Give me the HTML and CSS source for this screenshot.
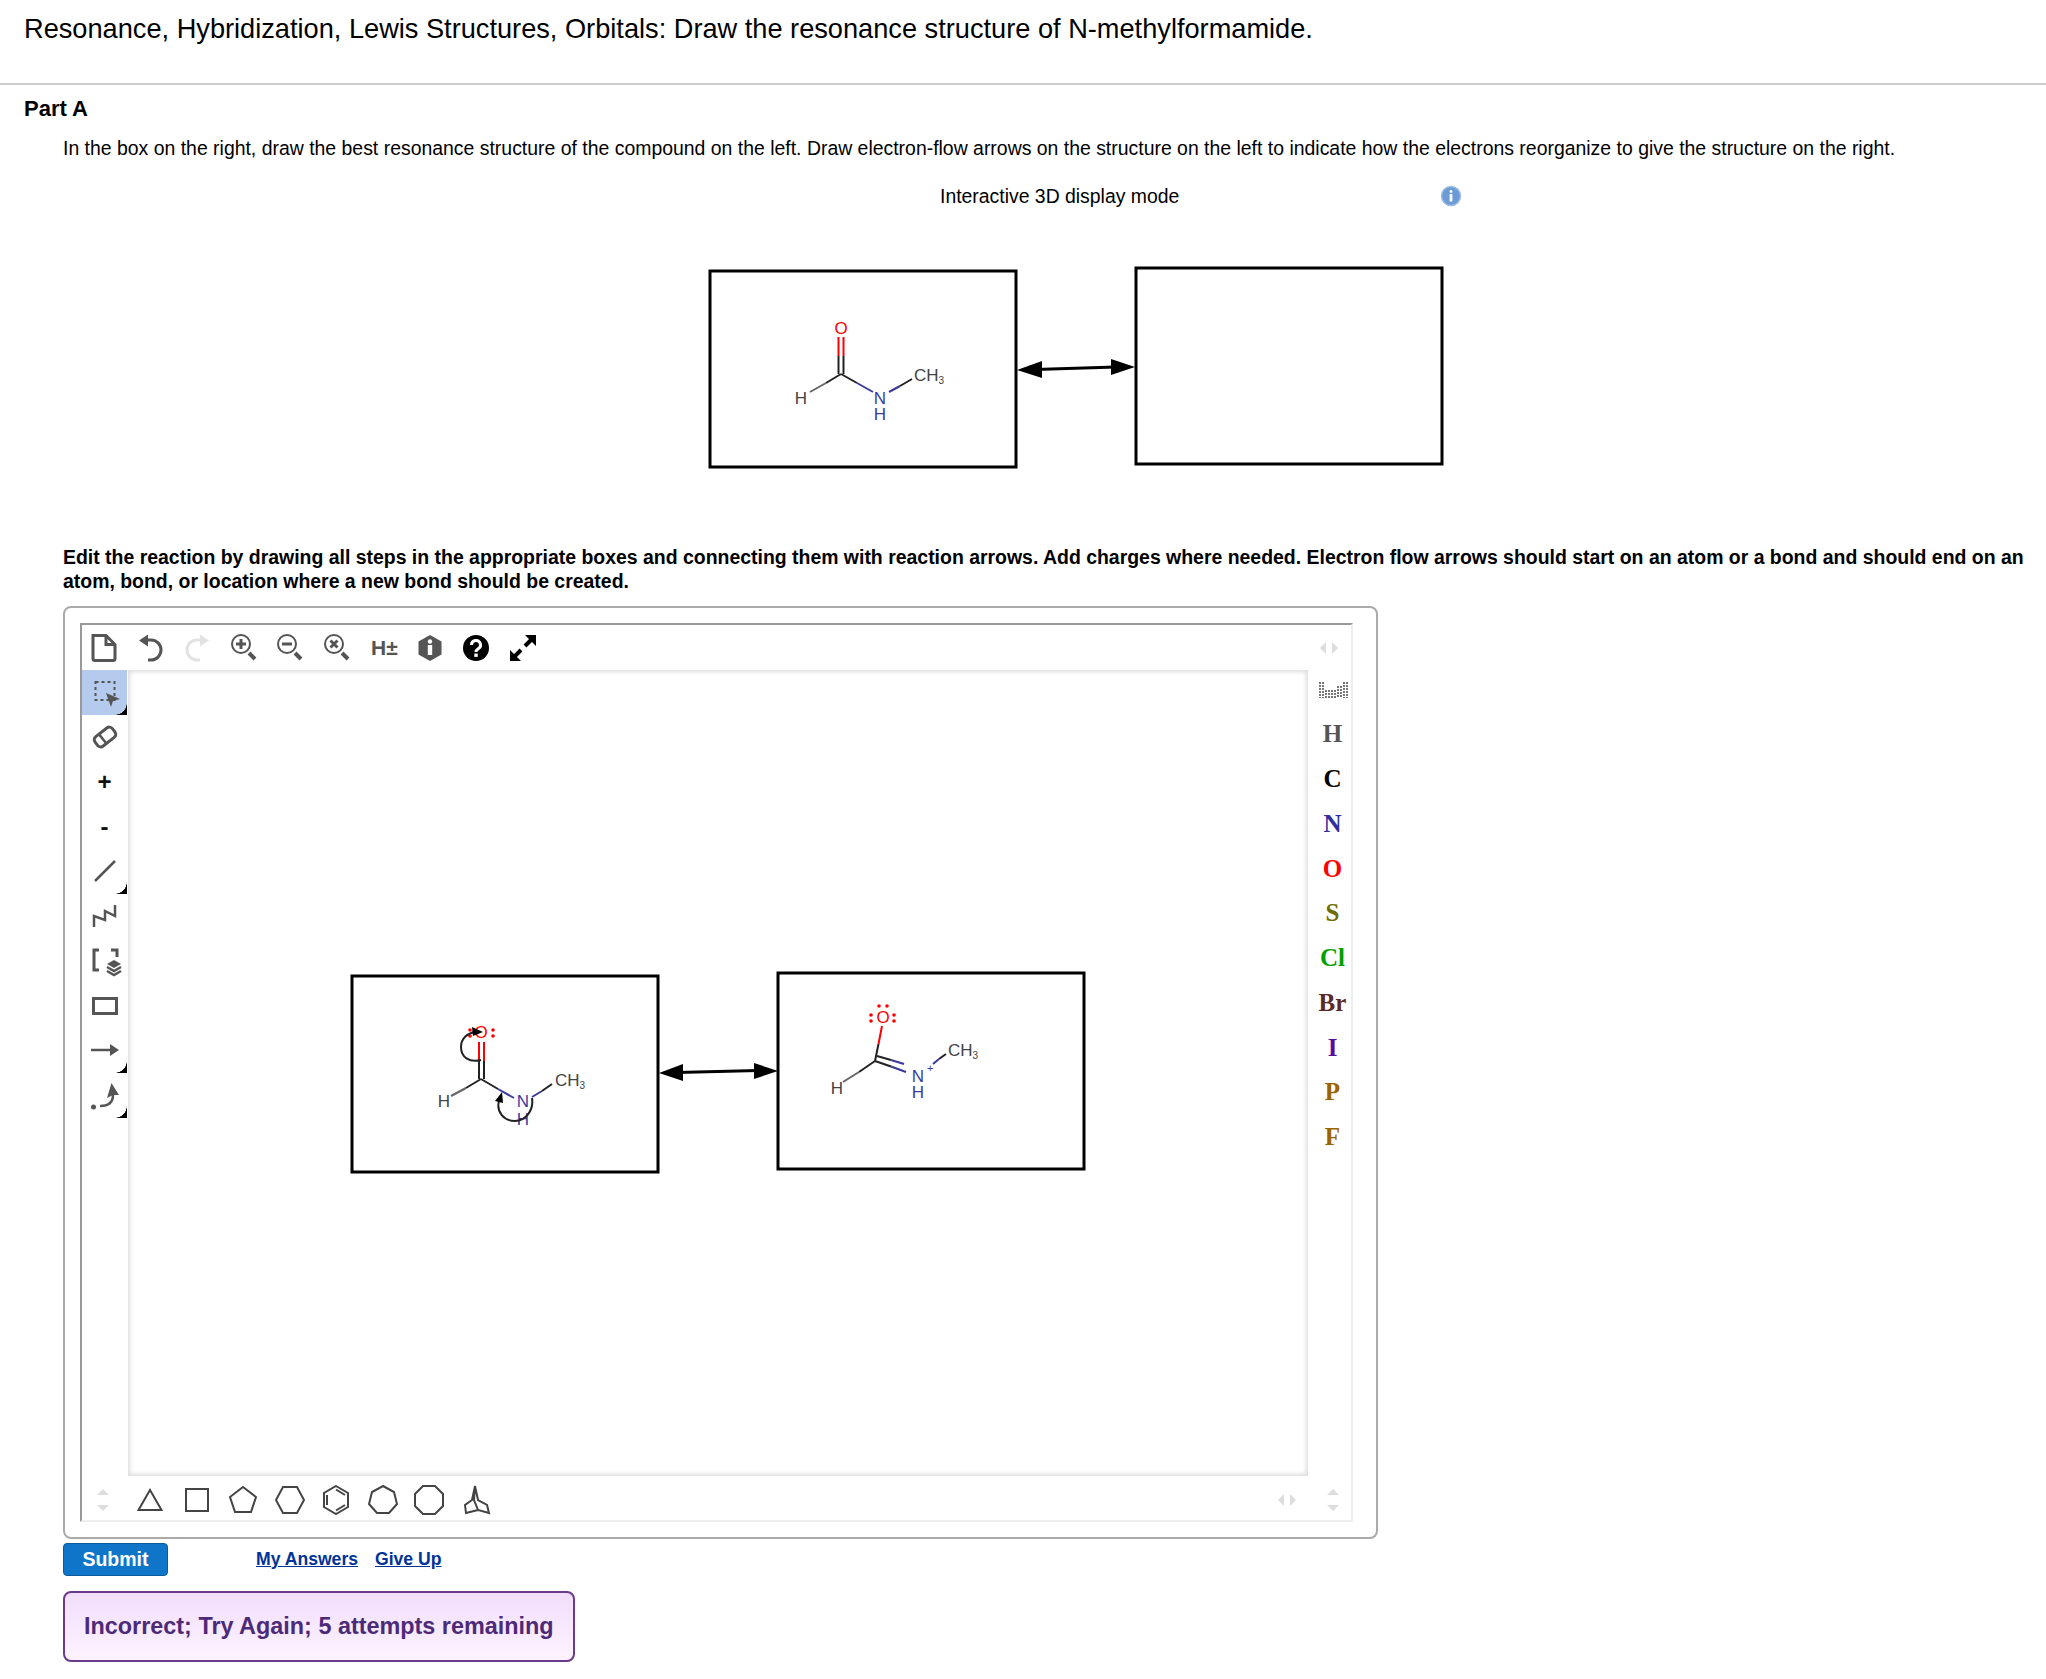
FILE: index.html
```html
<!DOCTYPE html>
<html lang="en">
<head>
    <meta charset="UTF-8">
    <title>Resonance, Hybridization, Lewis Structures, Orbitals</title>
    <link rel="stylesheet" href="styles.css">
</head>
<body>
    <h1 class="title">Resonance, Hybridization, Lewis Structures, Orbitals: Draw the resonance structure of N-methylformamide.</h1>
    <h2 class="part">Part A</h2>
    <p class="intro">In the box on the right, draw the best resonance structure of the compound on the left. Draw electron-flow arrows on the structure on the left to indicate how the electrons reorganize to give the structure on the right.</p>

    <div class="display-mode">
        <span class="display-label">Interactive 3D display mode</span>
        <svg class="info-dot" width="22" height="22" viewBox="0 0 22 22">
            <circle cx="11" cy="11" r="9.5" fill="#6b9bd6" stroke="#9dbbdd" stroke-width="1.5"/>
            <circle cx="11" cy="6.5" r="1.4" fill="#fff"/>
            <rect x="9.6" y="9" width="2.8" height="7.5" fill="#fff"/>
        </svg>
    </div>

    <!-- question scheme, coordinates are page pixels -->
    <svg class="scene" width="750" height="215" viewBox="700 260 750 215">
        <rect class="box" x="710" y="270" width="306" height="196"/>
        <rect class="box" x="1136" y="267" width="306" height="196"/>
        <line class="link" x1="1035" y1="368.5" x2="1116" y2="366"/>
        <polygon points="1017,369 1042,360 1042,377"/>
        <polygon points="1135,366 1111,358 1111,374"/>
        <g class="bond">
            <line class="red" x1="838.5" y1="336" x2="838.5" y2="355"/>
            <line class="red" x1="843.5" y1="336" x2="843.5" y2="355"/>
            <line x1="838.5" y1="355" x2="838.5" y2="373"/>
            <line x1="843.5" y1="355" x2="843.5" y2="373"/>
            <line x1="841" y1="373" x2="826" y2="382"/>
            <line class="grey" x1="826" y1="382" x2="810" y2="391"/>
            <line x1="841" y1="373" x2="857" y2="382"/>
            <line class="blue" x1="857" y1="382" x2="873" y2="391"/>
            <line class="blue" x1="889" y1="391" x2="900" y2="385"/>
            <line x1="900" y1="385" x2="912" y2="378"/>
        </g>
        <text class="atom red-text" x="841" y="333" text-anchor="middle">O</text>
        <text class="atom grey-text" x="801" y="403" text-anchor="middle">H</text>
        <text class="atom blue-text" x="880" y="403" text-anchor="middle">N</text>
        <text class="atom blue-text" x="880" y="419" text-anchor="middle">H</text>
        <text class="atom grey-text" x="914" y="380">CH<tspan class="sub" dy="3">3</tspan></text>
    </svg>

    <p class="instructions">Edit the reaction by drawing all steps in the appropriate boxes and connecting them with reaction arrows. Add charges where needed. Electron flow arrows should start on an atom or a bond and should end on an atom, bond, or location where a new bond should be created.</p>

    <div class="editor">
        <div class="sketcher">
            <div class="toolbar-top">
                <div class="tool-row">
                    <button class="tbtn"><svg width="30" height="30" viewBox="0 0 30 30"><path class="ico" d="M4 2.5h13l9 9v14a2 2 0 0 1-2 2H6a2 2 0 0 1-2-2z"/><path class="ico" d="M17 2.5v9h9"/></svg></button>
                    <button class="tbtn"><svg width="30" height="30" viewBox="0 0 30 30"><path class="ico" d="M10 7h5a10 10 0 0 1 0 20h-3"/><path class="ico-fill" d="M3 7.5l9-6v12z"/></svg></button>
                    <button class="tbtn"><svg width="30" height="30" viewBox="0 0 30 30"><path class="ico pale" d="M20 7h-5a10 10 0 0 0 0 20h3"/><path class="ico-fill pale" d="M27 7.5l-9-6v12z"/></svg></button>
                    <button class="tbtn"><svg width="30" height="30" viewBox="0 0 30 30"><circle class="thin" cx="12" cy="11" r="9"/><path class="thick-mark" d="M7 11h10M12 6v10"/><path class="handle" d="M20 20l6 6"/></svg></button>
                    <button class="tbtn"><svg width="30" height="30" viewBox="0 0 30 30"><circle class="thin" cx="12" cy="11" r="9"/><path class="thick-mark" d="M7 11h10"/><path class="handle" d="M20 20l6 6"/></svg></button>
                    <button class="tbtn"><svg width="30" height="30" viewBox="0 0 30 30"><circle class="thin" cx="12" cy="11" r="9"/><path class="thick-mark" d="M8.5 7.5l7 7M15.5 7.5l-7 7"/><path class="handle" d="M20 20l6 6"/></svg></button>
                    <button class="tbtn htoggle">H±</button>
                    <button class="tbtn"><svg width="30" height="30" viewBox="0 0 30 30"><path fill="#555" d="M15 2l11.5 6.5v13L15 28 3.500 21.5v-13z"/><circle cx="15" cy="8.5" r="2.2" fill="#fff"/><rect x="12.8" y="12" width="4.4" height="10" fill="#fff"/></svg></button>
                    <button class="tbtn"><svg width="30" height="30" viewBox="0 0 30 30"><circle cx="15" cy="15" r="13" fill="#000"/><path d="M10.5 12a4.5 4.5 0 1 1 6.8 3.8c-1.500 1-2.300 1.500-2.300 3.200" fill="none" stroke="#fff" stroke-width="3"/><rect x="13.3" y="20.5" width="3.4" height="3.4" fill="#fff"/></svg></button>
                    <button class="tbtn"><svg width="30" height="30" viewBox="0 0 30 30"><path d="M6 24l7-7M24 6l-7 7" stroke="#000" stroke-width="4"/><path d="M17 2h11v11zM2 17v11h11z" fill="#000"/></svg></button>
                </div>
                <div class="arrows-h">
                    <i class="tri tri-l"></i><i class="tri tri-r"></i>
                </div>
            </div>

            <div class="toolbar-left">
                <button class="lbtn selected corner"><svg width="34" height="34" viewBox="0 0 34 34"><rect x="7.5" y="7" width="19" height="18" fill="none" stroke="#555" stroke-width="2" stroke-dasharray="3 3"/><path d="M18 18l14 6-7 2-2 6z" fill="#555"/></svg></button>
                <button class="lbtn"><svg width="34" height="34" viewBox="0 0 34 34"><g transform="rotate(-38 17 17)"><rect class="ico" x="6" y="11" width="22" height="12" rx="4"/><path class="ico thinner" d="M14 11v12"/></g></svg></button>
                <button class="lbtn sign">+</button>
                <button class="lbtn sign">-</button>
                <button class="lbtn corner"><svg width="34" height="34" viewBox="0 0 34 34"><path class="ico thinner" d="M7 27L27 7"/></svg></button>
                <button class="lbtn"><svg width="34" height="34" viewBox="0 0 34 34"><path class="ico thinner" d="M6 28V17l11 4V12l10 5V6"/></svg></button>
                <button class="lbtn"><svg width="34" height="34" viewBox="0 0 34 34"><path class="ico" d="M11 6H6v20h5M23 6h6v7"/><path fill="#555" d="M26 16l7 4-7 4-7-4z"/><path class="ico thinner" d="M19 23l7 4 7-4M19 27l7 4 7-4"/></svg></button>
                <button class="lbtn"><svg width="34" height="34" viewBox="0 0 34 34"><rect class="ico" x="5.5" y="9.5" width="23" height="15"/></svg></button>
                <button class="lbtn corner"><svg width="34" height="34" viewBox="0 0 34 34"><path class="ico thinner" d="M3 17h22"/><path class="ico-fill" d="M31 17l-9-6v12z"/></svg></button>
                <button class="lbtn corner"><svg width="34" height="34" viewBox="0 0 34 34"><circle cx="5.5" cy="29" r="2.5" fill="#555"/><path class="ico thinner" d="M12 28c7 0 13-2 13-11"/><path class="ico-fill" d="M23.500 5L19 20l6-3 6 0z"/></svg></button>
            </div>

            <div class="canvas">
                <!-- drawn answer, coordinates are page pixels -->
                <svg class="answer" width="745" height="210" viewBox="345 970 745 210">
                    <rect class="box" x="353" y="977" width="306" height="196"/>
                    <rect class="box" x="779" y="974" width="306" height="196"/>
                    <line class="link" x1="678" y1="1073.5" x2="759" y2="1071.5"/>
                    <polygon points="660,1074 684,1065 684,1082"/>
                    <polygon points="779,1072 755,1064 755,1080"/>

                    <g class="bond">
                        <line class="red" x1="480" y1="1043" x2="480" y2="1062"/>
                        <line class="red" x1="485" y1="1043" x2="485" y2="1062"/>
                        <line x1="480" y1="1062" x2="480" y2="1080"/>
                        <line x1="485" y1="1062" x2="485" y2="1080"/>
                        <line x1="482" y1="1080" x2="467" y2="1089"/>
                        <line class="grey" x1="467" y1="1089" x2="452" y2="1097"/>
                        <line x1="482" y1="1080" x2="499" y2="1090"/>
                        <line class="blue" x1="499" y1="1090" x2="515" y2="1099"/>
                        <line class="blue" x1="533" y1="1098" x2="543" y2="1092"/>
                        <line x1="543" y1="1092" x2="553" y2="1085"/>
                    </g>
                    <text class="atom red-text" x="482" y="1039" text-anchor="middle">O</text>
                    <circle class="lone" cx="494" cy="1031" r="1.8"/><circle class="lone" cx="494" cy="1037" r="1.8"/>
                    <circle class="lone" cx="471" cy="1031" r="1.8"/><circle class="lone" cx="471" cy="1037" r="1.8"/>
                    <text class="atom grey-text" x="445" y="1108" text-anchor="middle">H</text>
                    <text class="atom blue-text" x="524" y="1108" text-anchor="middle">N</text>
                    <text class="atom blue-text" x="524" y="1126" text-anchor="middle">H</text>
                    <text class="atom grey-text" x="556" y="1087">CH<tspan class="sub" dy="3">3</tspan></text>
                    <path class="curve" d="M482 1061C470 1064 462 1058 462 1048C462 1039 469 1034 476 1033"/>
                    <polygon points="484,1033 473,1028 474,1037"/>
                    <path class="curve" d="M533 1099C535 1112 526 1122 516 1122C505 1122 497 1113 500 1102"/>
                    <polygon points="503,1093 496,1102 504,1104"/>

                    <g class="bond">
                        <line class="red" x1="883" y1="1027" x2="879.5" y2="1045"/>
                        <line x1="879.5" y1="1045" x2="876" y2="1062"/>
                        <line x1="876" y1="1062" x2="860" y2="1073"/>
                        <line class="grey" x1="860" y1="1073" x2="844" y2="1083"/>
                        <line x1="876" y1="1062" x2="892" y2="1067.5"/>
                        <line class="blue" x1="892" y1="1067.5" x2="907" y2="1073"/>
                        <line x1="878" y1="1057" x2="892" y2="1061"/>
                        <line class="blue" x1="892" y1="1061" x2="905" y2="1065"/>
                        <line class="blue" x1="934" y1="1065" x2="940" y2="1060"/>
                        <line x1="940" y1="1060" x2="947" y2="1055"/>
                    </g>
                    <text class="atom red-text" x="884" y="1024" text-anchor="middle">O</text>
                    <circle class="lone" cx="880" cy="1007" r="1.8"/><circle class="lone" cx="888" cy="1007" r="1.8"/>
                    <circle class="lone" cx="872" cy="1016" r="1.8"/><circle class="lone" cx="872" cy="1022" r="1.8"/>
                    <circle class="lone" cx="895" cy="1016" r="1.8"/><circle class="lone" cx="895" cy="1022" r="1.8"/>
                    <text class="atom grey-text" x="838" y="1095" text-anchor="middle">H</text>
                    <text class="atom blue-text" x="919" y="1083" text-anchor="middle">N</text>
                    <text class="charge" x="928" y="1073">+</text>
                    <text class="atom blue-text" x="919" y="1099" text-anchor="middle">H</text>
                    <text class="atom grey-text" x="949" y="1057">CH<tspan class="sub" dy="3">3</tspan></text>
                </svg>
            </div>

            <div class="toolbar-right">
                <svg class="ptable" width="30" height="18" viewBox="0 0 30 18">
                    <path d="M2 1v16M5 1v16M8 9v8M11 9v8M14 9v8M17 9v8M20 5v12M23 5v12M26 1v16M29 1v16" stroke="#777" stroke-width="2" stroke-dasharray="2 1"/>
                </svg>
                <button class="elem el-h">H</button>
                <button class="elem el-c">C</button>
                <button class="elem el-n">N</button>
                <button class="elem el-o">O</button>
                <button class="elem el-s">S</button>
                <button class="elem el-cl">Cl</button>
                <button class="elem el-br">Br</button>
                <button class="elem el-i">I</button>
                <button class="elem el-p">P</button>
                <button class="elem el-f">F</button>
            </div>

            <div class="toolbar-bottom">
                <div class="arrows-v left-scroll">
                    <i class="tri tri-u"></i><i class="tri tri-d"></i>
                </div>
                <div class="rings">
                    <svg class="ring" width="30" height="30" viewBox="0 0 30 30"><path d="M15 5l11.5 20h-23z"/></svg>
                    <svg class="ring" width="30" height="30" viewBox="0 0 30 30"><path d="M4 4h22v22H4z"/></svg>
                    <svg class="ring" width="30" height="30" viewBox="0 0 30 30"><path d="M15 2l13 10-5 15H7L2 12z"/></svg>
                    <svg class="ring" width="30" height="30" viewBox="0 0 30 30"><path d="M8 2h14l7 13-7 13H8L1 15z"/></svg>
                    <svg class="ring" width="30" height="30" viewBox="0 0 30 30"><path d="M15 1l12 7v14l-12 7-12-7V8z"/><path d="M6 10v10M15 4.5l9 5.500M15 25.500l9-5.500"/></svg>
                    <svg class="ring" width="30" height="30" viewBox="0 0 30 30"><path d="M15 1l11 6 3 12-8 9H9l-8-9 3-12z"/></svg>
                    <svg class="ring" width="30" height="30" viewBox="0 0 30 30"><path d="M9 1h12l8 8v12l-8 8H9l-8-8V9z"/></svg>
                    <svg class="ring" width="30" height="30" viewBox="0 0 30 30"><path d="M14 1l3 14 9 5 2 8-11-3-4-10zM14 1l-3 14-7 5 1 8 12-3"/></svg>
                </div>
                <div class="arrows-h bottom-nav">
                    <i class="tri tri-l"></i><i class="tri tri-r"></i>
                </div>
                <div class="arrows-v right-scroll">
                    <i class="tri tri-u"></i><i class="tri tri-d"></i>
                </div>
            </div>
        </div>
    </div>

    <div class="actions">
        <button class="submit">Submit</button>
        <a class="action-link first-link" href="#">My Answers</a>
        <a class="action-link" href="#">Give Up</a>
    </div>

    <div class="feedback">Incorrect; Try Again; 5 attempts remaining</div>
</body>
</html>
```

FILE: styles.css
```css
body {
    margin: 0;
    background-color: #fff;
    color: #000;
    font-family: "Liberation Sans", Arial, sans-serif;
}

.title {
    margin: 0;
    padding: 13px 0 0 24px;
    height: 83px;
    box-sizing: border-box;
    font-size: 27.2px;
    font-weight: normal;
    line-height: 32px;
    white-space: nowrap;
}

.part {
    margin: 0;
    padding: 12px 0 0 24px;
    height: 50px;
    box-sizing: border-box;
    border-top: 2px solid #ccc;
    font-size: 22px;
    line-height: 24px;
}

.intro {
    margin: 0;
    padding: 3px 0 0 63px;
    height: 33px;
    font-size: 19.43px;
    line-height: 24px;
    white-space: nowrap;
}

.display-mode {
    display: flex;
    align-items: center;
    height: 24px;
    margin-top: 15px;
    padding-left: 940px;
    font-size: 19.4px;
}

.display-label {
    width: 500px;
}

.info-dot {
    display: block;
}

.scene {
    display: block;
    margin: 53px 0 0 700px;
}

.box {
    fill: #fff;
    stroke: #000;
    stroke-width: 3;
}

.link {
    stroke: #000;
    stroke-width: 3;
}

.bond line {
    stroke: #222;
    stroke-width: 2;
}

.bond line.red {
    stroke: #f00;
}

.bond line.blue {
    stroke: #3b3b9e;
}

.bond line.grey {
    stroke: #666;
}

.atom {
    font-size: 17px;
}

.red-text {
    fill: #f00;
}

.blue-text {
    fill: #3b3b9e;
}

.grey-text {
    fill: #444;
}

.sub {
    font-size: 10px;
}

.charge {
    font-size: 11px;
    fill: #3b3b9e;
}

.lone {
    fill: #f00;
}

.curve {
    fill: none;
    stroke: #222;
    stroke-width: 2;
}

.instructions {
    margin: 70px 0 0;
    padding-left: 63px;
    width: 1975px;
    font-size: 19.45px;
    font-weight: bold;
    line-height: 23.5px;
}

.editor {
    box-sizing: border-box;
    width: 1315px;
    height: 933px;
    margin: 13px 0 0 63px;
    padding: 15px 23px 15px 15px;
    border: 2px solid #aaa;
    border-radius: 8px;
}

.sketcher {
    box-sizing: border-box;
    display: grid;
    grid-template-columns: 46px 1180px 1fr;
    grid-template-rows: 45px 806px 1fr;
    height: 100%;
    border-top: 2px solid #999;
    border-left: 2px solid #999;
    border-right: 2px solid #eee;
    border-bottom: 2px solid #eee;
}

.toolbar-top {
    grid-column: 1 / -1;
    display: flex;
    align-items: center;
    justify-content: space-between;
}

.tool-row {
    display: flex;
    padding-left: 7px;
}

.tbtn {
    width: 46.5px;
    height: 30px;
    padding: 0;
    border: 0;
    background: none;
}

.tbtn svg {
    display: block;
}

.htoggle {
    font-family: "Liberation Sans", Arial, sans-serif;
    font-size: 21px;
    font-weight: bold;
    color: #555;
    text-align: left;
    padding-left: 3px;
}

.ico {
    fill: none;
    stroke: #555;
    stroke-width: 3;
}

.thinner {
    stroke-width: 2.5;
}

.ico-fill {
    fill: #555;
}

.ico.pale {
    stroke: #e2e2e2;
}

.ico-fill.pale {
    fill: #e2e2e2;
}

.thin {
    fill: none;
    stroke: #555;
    stroke-width: 2;
}

.thick-mark {
    fill: none;
    stroke: #555;
    stroke-width: 3;
}

.handle {
    stroke: #555;
    stroke-width: 4;
}

.arrows-h {
    display: flex;
    gap: 6px;
    padding-right: 13px;
}

.tri {
    display: block;
    width: 0;
    height: 0;
    border-style: solid;
    border-color: transparent;
}

.tri-l {
    border-width: 6px 6px 6px 0;
    border-right-color: #ddd;
}

.tri-r {
    border-width: 6px 0 6px 6px;
    border-left-color: #ddd;
}

.tri-u {
    border-width: 0 6px 6px;
    border-bottom-color: #ddd;
}

.tri-d {
    border-width: 6px 6px 0;
    border-top-color: #ddd;
}

.toolbar-left {
    display: flex;
    flex-direction: column;
}

.lbtn {
    position: relative;
    display: flex;
    align-items: center;
    justify-content: center;
    width: 45px;
    height: 44.75px;
    padding: 0;
    border: 0;
    background: none;
    font-family: "Liberation Sans", Arial, sans-serif;
}

.lbtn.selected {
    background-color: #b4cbee;
}

.lbtn svg {
    display: block;
}

.corner::after {
    content: "";
    position: absolute;
    right: 0;
    bottom: 0;
    width: 12px;
    height: 12px;
    background: radial-gradient(circle at 0 0, transparent 11.5px, #000 12px);
}

.sign {
    font-size: 24px;
    font-weight: bold;
    color: #111;
}

.canvas {
    box-sizing: border-box;
    padding: 299px 0 0 216px;
    box-shadow: inset 0 0 4px 2px #ddd;
}

.answer {
    display: block;
}

.toolbar-right {
    display: flex;
    flex-direction: column;
    align-items: center;
    padding: 11px 0 0 6px;
}

.ptable {
    display: block;
    height: 18px;
    margin-bottom: 13px;
}

.elem {
    display: block;
    height: 44.75px;
    padding: 0;
    border: 0;
    background: none;
    font-family: "Liberation Serif", "Times New Roman", serif;
    font-size: 25px;
    font-weight: bold;
}

.el-h { color: #555; }
.el-c { color: #000; }
.el-n { color: #2f2f9e; }
.el-o { color: #f00; }
.el-s { color: #6e6e00; }
.el-cl { color: #00a000; }
.el-br { color: #5a2a2a; }
.el-i { color: #5a0aa0; }
.el-p { color: #9c6400; }
.el-f { color: #9c6400; }

.toolbar-bottom {
    grid-column: 1 / -1;
    display: flex;
    align-items: center;
    padding-top: 3px;
}

.arrows-v {
    display: flex;
    flex-direction: column;
    gap: 10px;
}

.left-scroll {
    margin-left: 15px;
}

.rings {
    display: flex;
    gap: 16.5px;
    margin-left: 26px;
}

.ring {
    display: block;
}

.ring path {
    fill: none;
    stroke: #444;
    stroke-width: 2;
}

.bottom-nav {
    margin-left: auto;
    padding-right: 0;
}

.right-scroll {
    margin: 0 12px 0 31px;
}

.actions {
    display: flex;
    align-items: center;
    height: 32px;
    margin: 4px 0 0 63px;
}

.submit {
    width: 105px;
    height: 33px;
    padding: 0;
    border: 1px solid #0a5c9e;
    border-radius: 4px;
    background-color: #0f75c8;
    color: #fff;
    font-family: "Liberation Sans", Arial, sans-serif;
    font-size: 19.5px;
    font-weight: bold;
}

.action-link {
    margin-left: 17px;
    color: #003399;
    font-size: 17.6px;
    font-weight: bold;
}

.first-link {
    margin-left: 88px;
}

.feedback {
    box-sizing: border-box;
    width: 512px;
    height: 71px;
    margin: 16px 0 0 63px;
    padding: 0 0 0 19px;
    border: 2px solid #6b3a8c;
    border-radius: 8px;
    background: linear-gradient(#f2defc, #fdf3ff);
    color: #4d2a78;
    font-size: 23.4px;
    font-weight: bold;
    line-height: 67px;
    white-space: nowrap;
}
```
